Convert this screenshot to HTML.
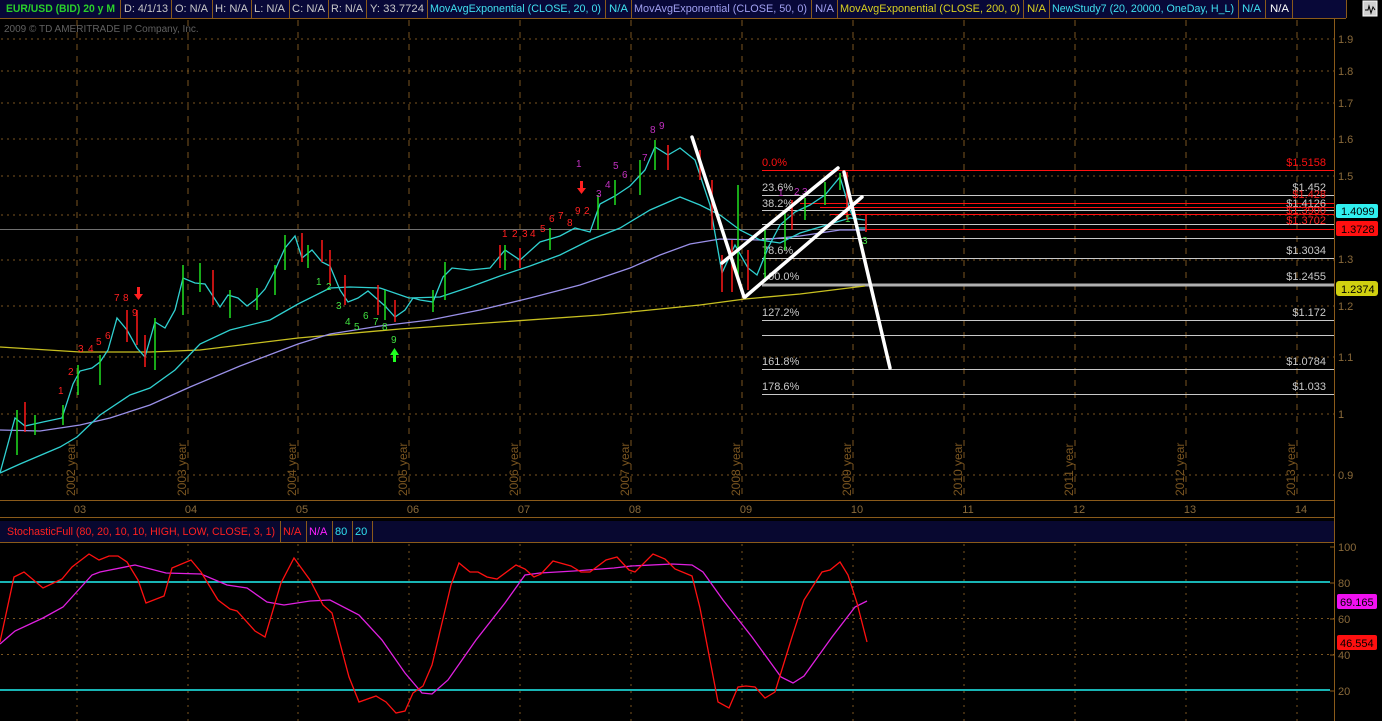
<!DOCTYPE html>
<html><head><meta charset="utf-8"><style>
html,body{margin:0;padding:0;background:#000;width:1382px;height:721px;overflow:hidden;font-family:"Liberation Sans",sans-serif}
</style></head><body>
<svg width="1382" height="721" xmlns="http://www.w3.org/2000/svg" font-family="Liberation Sans, sans-serif" font-size="11">
<rect width="1382" height="721" fill="#000"/>
<!-- header -->
<rect x="0" y="0" width="1346" height="18" fill="#080838"/>
<line x1="0" y1="18.5" x2="1346" y2="18.5" stroke="#8a5a1a"/>
<g stroke="#8a5a1a">
<line x1="120.5" y1="0" x2="120.5" y2="18"/><line x1="171.5" y1="0" x2="171.5" y2="18"/><line x1="212.5" y1="0" x2="212.5" y2="18"/><line x1="251.5" y1="0" x2="251.5" y2="18"/><line x1="289.5" y1="0" x2="289.5" y2="18"/><line x1="328.5" y1="0" x2="328.5" y2="18"/><line x1="366.5" y1="0" x2="366.5" y2="18"/><line x1="427.5" y1="0" x2="427.5" y2="18"/><line x1="605.5" y1="0" x2="605.5" y2="18"/><line x1="631.5" y1="0" x2="631.5" y2="18"/><line x1="811.5" y1="0" x2="811.5" y2="18"/><line x1="837.5" y1="0" x2="837.5" y2="18"/><line x1="1023.5" y1="0" x2="1023.5" y2="18"/><line x1="1049.5" y1="0" x2="1049.5" y2="18"/><line x1="1238.5" y1="0" x2="1238.5" y2="18"/><line x1="1265.5" y1="0" x2="1265.5" y2="18"/><line x1="1292.5" y1="0" x2="1292.5" y2="18"/><line x1="1346.5" y1="0" x2="1346.5" y2="18"/>
</g>
<g font-size="11" dominant-baseline="middle">
<text x="6" y="9" fill="#2ad02a" font-weight="bold" textLength="109" lengthAdjust="spacingAndGlyphs">EUR/USD (BID) 20 y M</text>
<text x="124" y="9" fill="#c8c8c8" textLength="44" lengthAdjust="spacingAndGlyphs">D: 4/1/13</text>
<text x="175" y="9" fill="#c8c8c8" textLength="33" lengthAdjust="spacingAndGlyphs">O: N/A</text>
<text x="215" y="9" fill="#c8c8c8" textLength="33" lengthAdjust="spacingAndGlyphs">H: N/A</text>
<text x="254" y="9" fill="#c8c8c8" textLength="31" lengthAdjust="spacingAndGlyphs">L: N/A</text>
<text x="292" y="9" fill="#c8c8c8" textLength="33" lengthAdjust="spacingAndGlyphs">C: N/A</text>
<text x="331" y="9" fill="#c8c8c8" textLength="32" lengthAdjust="spacingAndGlyphs">R: N/A</text>
<text x="370" y="9" fill="#c8c8c8" textLength="54" lengthAdjust="spacingAndGlyphs">Y: 33.7724</text>
<text x="430" y="9" fill="#40e0f0" textLength="171" lengthAdjust="spacingAndGlyphs">MovAvgExponential (CLOSE, 20, 0)</text>
<text x="609" y="9" fill="#40e0f0" textLength="19" lengthAdjust="spacingAndGlyphs">N/A</text>
<text x="634" y="9" fill="#a0a0f0" textLength="173" lengthAdjust="spacingAndGlyphs">MovAvgExponential (CLOSE, 50, 0)</text>
<text x="815" y="9" fill="#a0a0f0" textLength="19" lengthAdjust="spacingAndGlyphs">N/A</text>
<text x="840" y="9" fill="#d8d020" textLength="180" lengthAdjust="spacingAndGlyphs">MovAvgExponential (CLOSE, 200, 0)</text>
<text x="1027" y="9" fill="#d8d020" textLength="19" lengthAdjust="spacingAndGlyphs">N/A</text>
<text x="1052" y="9" fill="#40e0f0" textLength="182" lengthAdjust="spacingAndGlyphs">NewStudy7 (20, 20000, OneDay, H_L)</text>
<text x="1242" y="9" fill="#40e0f0" textLength="19" lengthAdjust="spacingAndGlyphs">N/A</text>
<text x="1270" y="9" fill="#fff" textLength="19" lengthAdjust="spacingAndGlyphs">N/A</text>
</g>
<rect x="1363" y="1" width="14" height="15" fill="#d0d0d0" stroke="#fff"/>
<polyline points="1365,10 1368,10 1369,6 1371,13 1373,7 1375,10" fill="none" stroke="#000"/>
<text x="4" y="32" fill="#606060" font-size="10">2009 © TD AMERITRADE IP Company, Inc.</text>

<!-- grid -->
<g stroke="#7a5520" stroke-dasharray="2,4">
<line x1="1" y1="39" x2="1334" y2="39"/><line x1="1" y1="71" x2="1334" y2="71"/><line x1="1" y1="103" x2="1334" y2="103"/><line x1="1" y1="139" x2="1334" y2="139"/><line x1="1" y1="176" x2="1334" y2="176"/><line x1="1" y1="215" x2="1334" y2="215"/><line x1="1" y1="260" x2="1334" y2="260"/><line x1="1" y1="306" x2="1334" y2="306"/><line x1="1" y1="357" x2="1334" y2="357"/><line x1="1" y1="414" x2="1334" y2="414"/><line x1="1" y1="475" x2="1334" y2="475"/>
</g>
<g stroke="#7a5520" stroke-dasharray="6,6">
<line x1="77" y1="20" x2="77" y2="500"/><line x1="188" y1="20" x2="188" y2="500"/><line x1="298" y1="20" x2="298" y2="500"/><line x1="409" y1="20" x2="409" y2="500"/><line x1="520" y1="20" x2="520" y2="500"/><line x1="631" y1="20" x2="631" y2="500"/><line x1="742" y1="20" x2="742" y2="500"/><line x1="853" y1="20" x2="853" y2="500"/><line x1="964" y1="20" x2="964" y2="500"/><line x1="1075" y1="20" x2="1075" y2="500"/><line x1="1186" y1="20" x2="1186" y2="500"/><line x1="1297" y1="20" x2="1297" y2="500"/>
</g>
<g fill="#7a5520" font-size="12">
<text transform="translate(75,496) rotate(-90)">2002 year</text><text transform="translate(186,496) rotate(-90)">2003 year</text><text transform="translate(296,496) rotate(-90)">2004 year</text><text transform="translate(407,496) rotate(-90)">2005 year</text><text transform="translate(518,496) rotate(-90)">2006 year</text><text transform="translate(629,496) rotate(-90)">2007 year</text><text transform="translate(740,496) rotate(-90)">2008 year</text><text transform="translate(851,496) rotate(-90)">2009 year</text><text transform="translate(962,496) rotate(-90)">2010 year</text><text transform="translate(1073,496) rotate(-90)">2011 year</text><text transform="translate(1184,496) rotate(-90)">2012 year</text><text transform="translate(1295,496) rotate(-90)">2013 year</text>
</g>
<!-- axes -->
<g stroke="#8a5a1a"><line x1="1334.5" y1="18" x2="1334.5" y2="721"/><line x1="0" y1="500.5" x2="1334" y2="500.5"/><line x1="0" y1="517.5" x2="1334" y2="517.5"/></g>
<g fill="#8a6a3a" font-size="11">
<text x="1338" y="43">1.9</text><text x="1338" y="75">1.8</text><text x="1338" y="107">1.7</text><text x="1338" y="143">1.6</text><text x="1338" y="180">1.5</text><text x="1338" y="263">1.3</text><text x="1338" y="310">1.2</text><text x="1338" y="361">1.1</text><text x="1338" y="418">1</text><text x="1338" y="479">0.9</text>
</g>
<g fill="#8a6a3a" font-size="11" text-anchor="middle">
<text x="80" y="513">03</text><text x="191" y="513">04</text><text x="302" y="513">05</text><text x="413" y="513">06</text><text x="524" y="513">07</text><text x="635" y="513">08</text><text x="746" y="513">09</text><text x="857" y="513">10</text><text x="968" y="513">11</text><text x="1079" y="513">12</text><text x="1190" y="513">13</text><text x="1301" y="513">14</text>
</g>

<!-- fib lines -->
<line x1="0" y1="229.5" x2="1334" y2="229.5" stroke="#707070"/>
<g stroke="#c8c8c8">
<line x1="762" y1="195.5" x2="1334" y2="195.5"/><line x1="762" y1="210.5" x2="1334" y2="210.5"/><line x1="762" y1="224.5" x2="1334" y2="224.5"/><line x1="762" y1="238.5" x2="1334" y2="238.5"/><line x1="762" y1="258.5" x2="1334" y2="258.5"/><line x1="762" y1="320.5" x2="1334" y2="320.5"/><line x1="762" y1="335.5" x2="1334" y2="335.5"/><line x1="762" y1="369.5" x2="1334" y2="369.5"/><line x1="762" y1="394.5" x2="1334" y2="394.5"/>
</g>
<line x1="762" y1="285" x2="1334" y2="285" stroke="#b0b0b0" stroke-width="3"/>
<g stroke="#ff1010">
<line x1="762" y1="170.5" x2="1334" y2="170.5"/><line x1="800" y1="203.5" x2="1334" y2="203.5"/><line x1="820" y1="207.5" x2="1334" y2="207.5"/><line x1="830" y1="214.5" x2="1334" y2="214.5"/><line x1="865" y1="229.5" x2="1334" y2="229.5"/>
</g>
<g font-size="11">
<text x="762" y="166" fill="#ff1010">0.0%</text>
<text x="762" y="191" fill="#c8c8c8">23.6%</text><text x="762" y="207" fill="#c8c8c8">38.2%</text><text x="762" y="254" fill="#c8c8c8">78.6%</text><text x="762" y="280" fill="#c8c8c8">100.0%</text><text x="762" y="316" fill="#c8c8c8">127.2%</text><text x="762" y="365" fill="#c8c8c8">161.8%</text><text x="762" y="390" fill="#c8c8c8">178.6%</text>
<g text-anchor="end">
<text x="1326" y="166" fill="#ff1010">$1.5158</text><text x="1326" y="191" fill="#c8c8c8">$1.452</text><text x="1326" y="198" fill="#ff2020">$1.428</text><text x="1326" y="207" fill="#c8c8c8">$1.4126</text><text x="1326" y="214" fill="#ff2020">$1.3900</text><text x="1326" y="224" fill="#ff2020">$1.3702</text><text x="1326" y="254" fill="#c8c8c8">$1.3034</text><text x="1326" y="280" fill="#c8c8c8">$1.2455</text><text x="1326" y="316" fill="#c8c8c8">$1.172</text><text x="1326" y="365" fill="#c8c8c8">$1.0784</text><text x="1326" y="390" fill="#c8c8c8">$1.033</text>
</g></g>

<!-- moving averages -->
<polyline fill="none" stroke="#c8c020" stroke-width="1.3" points="0,347 80,352 150,352 200,350 298,338 400,329 500,322 600,315 700,305 745,299 800,294 865,286"/>
<polyline fill="none" stroke="#9a90e8" stroke-width="1.3" points="0,430 40,431 80,425 110,418 150,405 190,387 240,366 298,344 330,334 380,326 430,320 480,310 530,298 580,285 630,268 660,255 690,244 720,239 760,240 800,236 840,230 865,230"/>
<polyline fill="none" stroke="#30d0d0" stroke-width="1.3" points="0,473 20,464 60,447 77,437 100,415 130,395 150,388 175,370 200,344 230,330 270,320 298,304 330,288 350,287 380,288 409,298 440,297 470,287 500,276 530,266 560,255 590,240 620,228 650,210 680,197 700,205 720,215 740,230 760,240 780,243 800,233 830,224 850,218 865,220"/>
<polyline fill="none" stroke="#30d0d0" stroke-width="1.3" points="0,473 15,418 25,426 43,422 62,418 73,384 80,371 92,368 100,362 108,350 117,318 127,330 137,348 145,357 155,322 165,328 175,310 183,278 195,283 205,284 220,307 228,295 238,298 247,306 255,300 265,289 275,270 285,248 295,236 302,258 312,250 322,262 330,266 340,290 348,302 358,298 368,291 385,306 395,317 405,310 413,298 420,300 433,302 443,277 452,268 470,270 490,268 505,250 520,260 540,242 560,236 575,228 590,232 600,204 615,196 630,186 645,170 655,147 668,155 680,148 695,160 710,205 722,273 735,245 748,268 757,275 768,248 780,225 795,212 810,205 825,195 840,177 850,210 858,228 866,228"/>
<!-- bars -->
<g stroke="#20e020" stroke-width="1.5">
<line x1="17" y1="410" x2="17" y2="455"/><line x1="35" y1="415" x2="35" y2="435"/><line x1="63" y1="405" x2="63" y2="425"/><line x1="78" y1="365" x2="78" y2="395"/><line x1="100" y1="355" x2="100" y2="385"/><line x1="155" y1="318" x2="155" y2="370"/><line x1="183" y1="265" x2="183" y2="315"/><line x1="200" y1="263" x2="200" y2="292"/><line x1="230" y1="290" x2="230" y2="318"/><line x1="257" y1="288" x2="257" y2="310"/><line x1="275" y1="265" x2="275" y2="295"/><line x1="285" y1="235" x2="285" y2="270"/><line x1="308" y1="245" x2="308" y2="268"/><line x1="385" y1="290" x2="385" y2="320"/><line x1="433" y1="290" x2="433" y2="312"/><line x1="445" y1="262" x2="445" y2="300"/><line x1="505" y1="245" x2="505" y2="270"/><line x1="550" y1="228" x2="550" y2="250"/><line x1="598" y1="195" x2="598" y2="230"/><line x1="615" y1="180" x2="615" y2="205"/><line x1="640" y1="160" x2="640" y2="195"/><line x1="655" y1="140" x2="655" y2="170"/><line x1="738" y1="185" x2="738" y2="280"/><line x1="765" y1="230" x2="765" y2="282"/><line x1="785" y1="210" x2="785" y2="250"/><line x1="805" y1="198" x2="805" y2="220"/><line x1="825" y1="182" x2="825" y2="205"/><line x1="840" y1="173" x2="840" y2="190"/>
</g>
<g stroke="#ff1818" stroke-width="1.5">
<line x1="25" y1="402" x2="25" y2="432"/><line x1="127" y1="310" x2="127" y2="342"/><line x1="137" y1="310" x2="137" y2="345"/><line x1="145" y1="335" x2="145" y2="367"/><line x1="213" y1="270" x2="213" y2="305"/><line x1="302" y1="233" x2="302" y2="262"/><line x1="322" y1="240" x2="322" y2="262"/><line x1="330" y1="250" x2="330" y2="285"/><line x1="345" y1="275" x2="345" y2="305"/><line x1="378" y1="285" x2="378" y2="315"/><line x1="395" y1="300" x2="395" y2="322"/><line x1="500" y1="245" x2="500" y2="268"/><line x1="520" y1="248" x2="520" y2="268"/><line x1="668" y1="145" x2="668" y2="170"/><line x1="700" y1="150" x2="700" y2="180"/><line x1="712" y1="180" x2="712" y2="230"/><line x1="722" y1="255" x2="722" y2="292"/><line x1="732" y1="240" x2="732" y2="292"/><line x1="748" y1="250" x2="748" y2="290"/><line x1="792" y1="200" x2="792" y2="230"/><line x1="847" y1="172" x2="847" y2="220"/><line x1="866" y1="215" x2="866" y2="232"/>
</g>
<!-- TD counts -->
<g font-size="10" fill="#ff2020">
<text x="58" y="394">1</text><text x="68" y="375">2</text><text x="78" y="352">3</text><text x="88" y="352">4</text><text x="96" y="345">5</text><text x="105" y="339">6</text><text x="114" y="301">7</text><text x="123" y="301">8</text><text x="132" y="316">9</text>
<text x="502" y="237">1</text><text x="512" y="237">2</text><text x="522" y="237">3</text><text x="530" y="237">4</text><text x="540" y="232">5</text><text x="549" y="222">6</text><text x="558" y="219">7</text><text x="567" y="226">8</text><text x="575" y="214">9</text><text x="584" y="214">2</text>
</g>
<g font-size="10" fill="#c030c0">
<text x="576" y="167">1</text><text x="596" y="197">3</text><text x="605" y="188">4</text><text x="613" y="169">5</text><text x="622" y="178">6</text><text x="642" y="161">7</text><text x="650" y="133">8</text><text x="659" y="129">9</text>
<text x="778" y="196">1</text><text x="794" y="195">2</text><text x="802" y="195">3</text>
</g>
<g font-size="10" fill="#40e040">
<text x="316" y="285">1</text><text x="326" y="290">2</text><text x="336" y="309">3</text><text x="345" y="325">4</text><text x="354" y="330">5</text><text x="363" y="319">6</text><text x="373" y="325">7</text><text x="382" y="330">8</text><text x="391" y="343">9</text>
<text x="845" y="222">1</text><text x="862" y="244">3</text>
</g>
<polygon points="137,287 140,287 140,294 143,294 138.5,300 134,294 137,294" fill="#ff2020"/>
<polygon points="580,181 583,181 583,188 586,188 581.5,194 577,188 580,188" fill="#ff2020"/>
<polygon points="393,362 396,362 396,355 399,355 394.5,348 390,355 393,355" fill="#20ff20"/>
<!-- trend lines -->
<g stroke="#fff" stroke-width="3.5" stroke-linecap="round">
<line x1="692" y1="137" x2="744" y2="297"/><line x1="722" y1="263" x2="838" y2="168"/><line x1="745" y1="297" x2="862" y2="197"/><line x1="844" y1="172" x2="890" y2="368"/>
</g>
<!-- price labels -->
<rect x="1336" y="204" width="42" height="14" rx="2" fill="#30f0f0"/><text x="1341" y="215" fill="#000">1.4099</text>
<rect x="1336" y="221" width="42" height="15" rx="2" fill="#ff1010"/><text x="1341" y="233" fill="#000">1.3728</text>
<rect x="1336" y="281" width="42" height="15" rx="3" fill="#d0d010"/><text x="1341" y="293" fill="#000">1.2374</text>

<!-- stochastic panel -->
<rect x="0" y="521" width="1334" height="21" fill="#080830"/>
<line x1="0" y1="542.5" x2="1334" y2="542.5" stroke="#8a5a1a"/>
<g stroke="#8a5a1a"><line x1="280.5" y1="521" x2="280.5" y2="542"/><line x1="306.5" y1="521" x2="306.5" y2="542"/><line x1="332.5" y1="521" x2="332.5" y2="542"/><line x1="352.5" y1="521" x2="352.5" y2="542"/><line x1="372.5" y1="521" x2="372.5" y2="542"/></g>
<g dominant-baseline="middle"><text x="7" y="532" fill="#ff2020" textLength="268" lengthAdjust="spacingAndGlyphs">StochasticFull (80, 20, 10, 10, HIGH, LOW, CLOSE, 3, 1)</text><text x="283" y="532" fill="#ff2020">N/A</text><text x="309" y="532" fill="#ff20ff">N/A</text><text x="335" y="532" fill="#30e0f0">80</text><text x="355" y="532" fill="#30e0f0">20</text></g>
<g stroke="#7a5520" stroke-dasharray="2,4"><line x1="1" y1="618.5" x2="1334" y2="618.5"/><line x1="1" y1="654.5" x2="1334" y2="654.5"/></g>
<g stroke="#7a5520" stroke-dasharray="2,5">
<line x1="77" y1="544" x2="77" y2="721"/><line x1="188" y1="544" x2="188" y2="721"/><line x1="298" y1="544" x2="298" y2="721"/><line x1="409" y1="544" x2="409" y2="721"/><line x1="520" y1="544" x2="520" y2="721"/><line x1="631" y1="544" x2="631" y2="721"/><line x1="742" y1="544" x2="742" y2="721"/><line x1="853" y1="544" x2="853" y2="721"/><line x1="964" y1="544" x2="964" y2="721"/><line x1="1075" y1="544" x2="1075" y2="721"/><line x1="1186" y1="544" x2="1186" y2="721"/><line x1="1297" y1="544" x2="1297" y2="721"/>
</g>
<g stroke="#20f0f0" stroke-width="1.5"><line x1="0" y1="582" x2="1330" y2="582"/><line x1="0" y1="690" x2="1330" y2="690"/></g>
<polyline fill="none" stroke="#e020e0" stroke-width="1.3" points="0,644 15,631 43,618 63,607 92,575 100,572 135,565 166,573 201,574 227,585 247,588 267,602 284,605 310,601 330,600 359,615 382,640 405,673 422,693 432,694 448,680 476,640 505,603 525,575 540,573 574,571 614,568 631,566 672,564 692,565 703,572 723,600 752,637 781,677 793,683 804,676 832,637 855,607 867,601"/>
<polyline fill="none" stroke="#ff1010" stroke-width="1.3" points="0,642 14,577 24,572 43,588 62,579 72,567 89,554 99,560 109,556 118,556 127,562 138,580 146,603 164,596 172,568 191,560 201,572 218,600 230,609 237,611 255,631 265,637 281,583 294,558 310,580 323,605 332,613 349,677 359,702 376,696 386,702 396,713 405,711 413,693 423,686 432,665 451,585 459,563 470,572 478,572 487,577 497,579 516,565 525,569 534,577 541,574 553,561 571,566 581,572 590,572 606,560 617,557 629,570 635,572 653,554 665,559 675,569 692,576 700,608 718,702 729,708 738,687 746,686 755,687 765,698 775,692 792,637 804,600 822,572 830,570 840,562 848,575 857,603 867,642"/>
<g fill="#8a6a3a"><text x="1338" y="551">100</text><text x="1338" y="587">80</text><text x="1338" y="623">60</text><text x="1338" y="659">40</text><text x="1338" y="695">20</text></g>
<g stroke="#8a5a1a"><line x1="1330" y1="547" x2="1334" y2="547"/><line x1="1330" y1="583" x2="1334" y2="583"/><line x1="1330" y1="619" x2="1334" y2="619"/><line x1="1330" y1="655" x2="1334" y2="655"/><line x1="1330" y1="691" x2="1334" y2="691"/></g>
<rect x="1337" y="594" width="40" height="15" rx="2" fill="#f010f0"/><text x="1340" y="606" fill="#000">69.165</text>
<rect x="1337" y="635" width="40" height="15" rx="2" fill="#ff1010"/><text x="1340" y="647" fill="#000">46.554</text>
</svg>
</body></html>
